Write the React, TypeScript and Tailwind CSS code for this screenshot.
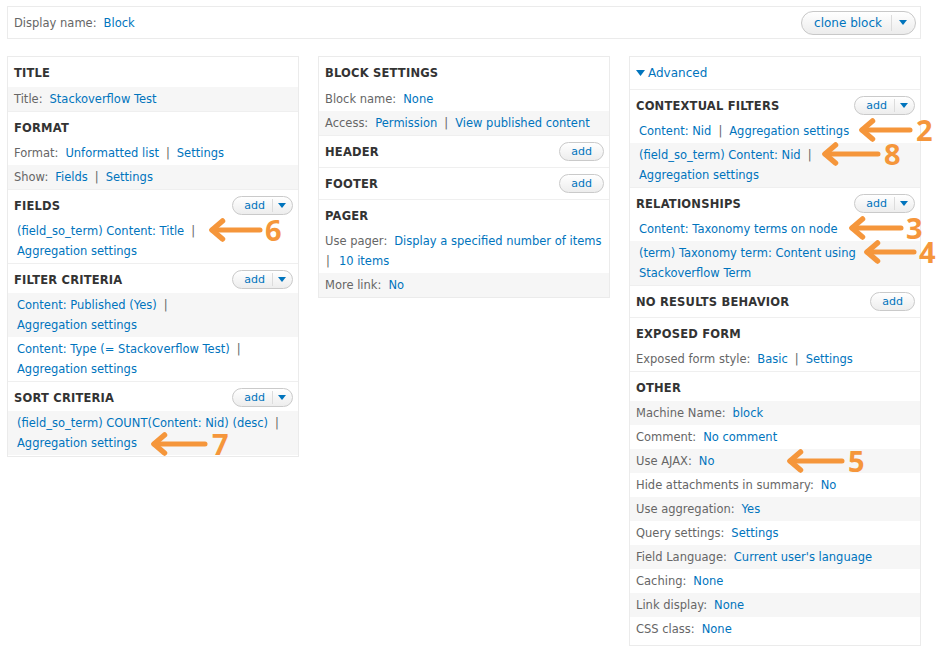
import React from "react";

const BLUE = "text-[#0074bd]";

// small dropdown caret used on buttons
function Caret() {
  return (
    <svg width="8" height="5" viewBox="0 0 8 5">
      <polygon points="0,0 8,0 4,5" fill="#0074bd" />
    </svg>
  );
}

function AddButton({ split }: { split?: boolean }) {
  return (
    <div className="flex h-[19px] items-center rounded-full border border-[#cacaca] bg-linear-to-b from-white to-[#ededed] text-[11px] leading-none text-[#0074bd]">
      <span className={split ? "pl-[11px] pr-[7px]" : "px-[11px]"}>add</span>
      {split && (
        <span className="flex h-[13px] items-center border-l border-[#dcdcdc] pl-[5px] pr-[6px]">
          <Caret />
        </span>
      )}
    </div>
  );
}

function Head({
  title,
  add,
  tall,
}: {
  title: string;
  add?: "split" | "plain";
  tall?: boolean;
}) {
  return (
    <div
      className={`flex items-start justify-between border-t border-[#efefef] pl-[6px] pr-[5px] first:border-t-0 ${
        tall ? "h-[32px]" : "h-[30px]"
      }`}
    >
      <span className="pt-[8px] text-[11.5px] font-bold leading-[16px] tracking-[0.2px] text-[#333]">
        {title}
      </span>
      {add && (
        <div className="pt-[6px]">
          <AddButton split={add === "split"} />
        </div>
      )}
    </div>
  );
}

function Row({
  gray,
  indent,
  lines,
}: {
  gray?: boolean;
  indent?: boolean;
  lines: React.ReactNode[];
}) {
  return (
    <div
      className={`py-[2px] pr-[6px] ${gray ? "bg-[#f6f6f6]" : "bg-white"} ${
        indent ? "pl-[9px]" : "pl-[6px]"
      }`}
    >
      {lines.map((line, i) => (
        <div key={i} className="h-[20px] whitespace-nowrap leading-[20px]">
          {line}
        </div>
      ))}
    </div>
  );
}

const Label = ({ children }: { children: React.ReactNode }) => (
  <span className="mr-[7px] text-[#666]">{children}</span>
);
const Link = ({ children }: { children: React.ReactNode }) => (
  <span className={BLUE}>{children}</span>
);
const Sep = () => <span className="mx-[7px] text-[#666]">|</span>;

function Arrow({ pos, len, n, gap }: { pos: string; len: number; n: string; gap: string }) {
  return (
    <div className={`absolute flex h-[30px] items-center ${pos}`}>
      <svg width={len} height="30" viewBox={`0 0 ${len} 30`}>
        <path
          d={`M${len - 3} 15 H5`}
          stroke="#f5963b"
          strokeWidth="5"
          strokeLinecap="round"
        />
        <path
          d="M15.5 6 L5 15 L15.5 24"
          fill="none"
          stroke="#f5963b"
          strokeWidth="5.5"
          strokeLinecap="round"
          strokeLinejoin="round"
        />
      </svg>
      <span
        className={`font-['Open_Sans',sans-serif] text-[29px] font-bold leading-[18px] text-[#f5963b] ${gap}`}
      >
        {n}
      </span>
    </div>
  );
}

export default function App() {
  return (
    <div className="relative min-h-[658px] w-[947px] bg-white pl-[7px] pt-[6px] font-['DejaVu_Sans',sans-serif] text-[11.5px] text-[#333]">
      {/* Display name bar */}
      <div className="flex h-[33px] w-[914px] items-center justify-between border border-[#ebebeb] pl-[6px] pr-[4px]">
        <div className="pt-[3px]">
          <Label>Display name:</Label>
          <Link>Block</Link>
        </div>
        <div className="flex h-[24px] items-center rounded-full border border-[#c8c8c8] bg-linear-to-b from-white to-[#ececec] text-[12px] text-[#0074bd]">
          <span className="pl-[12px] pr-[9px]">clone block</span>
          <span className="flex h-[16px] items-center border-l border-[#dcdcdc] pl-[7px] pr-[8px]">
            <Caret />
          </span>
        </div>
      </div>

      <div className="mt-[17px] grid w-[914px] grid-cols-3 items-start gap-[19px]">
        {/* Left column */}
        <div className="border border-[#ebebeb] pb-[1px]">
          <Head title="TITLE" />
          <Row gray lines={[<><Label>Title:</Label><Link>Stackoverflow Test</Link></>]} />
          <Head title="FORMAT" />
          <Row
            lines={[
              <>
                <Label>Format:</Label>
                <Link>Unformatted list</Link>
                <Sep />
                <Link>Settings</Link>
              </>,
            ]}
          />
          <Row
            gray
            lines={[
              <>
                <Label>Show:</Label>
                <Link>Fields</Link>
                <Sep />
                <Link>Settings</Link>
              </>,
            ]}
          />
          <Head title="FIELDS" add="split" />
          <Row
            indent
            lines={[
              <>
                <Link>(field_so_term) Content: Title</Link>
                <Sep />
              </>,
              <Link>Aggregation settings</Link>,
            ]}
          />
          <Head title="FILTER CRITERIA" add="split" />
          <Row
            gray
            indent
            lines={[
              <>
                <Link>Content: Published (Yes)</Link>
                <Sep />
              </>,
              <Link>Aggregation settings</Link>,
            ]}
          />
          <Row
            indent
            lines={[
              <>
                <Link>Content: Type (= Stackoverflow Test)</Link>
                <Sep />
              </>,
              <Link>Aggregation settings</Link>,
            ]}
          />
          <Head title="SORT CRITERIA" add="split" />
          <Row
            gray
            indent
            lines={[
              <>
                <Link>(field_so_term) COUNT(Content: Nid) (desc)</Link>
                <Sep />
              </>,
              <Link>Aggregation settings</Link>,
            ]}
          />
        </div>

        {/* Middle column */}
        <div className="border border-[#ebebeb]">
          <Head title="BLOCK SETTINGS" />
          <Row lines={[<><Label>Block name:</Label><Link>None</Link></>]} />
          <Row
            gray
            lines={[
              <>
                <Label>Access:</Label>
                <Link>Permission</Link>
                <Sep />
                <Link>View published content</Link>
              </>,
            ]}
          />
          <Head title="HEADER" add="plain" tall />
          <Head title="FOOTER" add="plain" tall />
          <Head title="PAGER" />
          <Row
            lines={[
              <>
                <Label>Use pager:</Label>
                <Link>Display a specified number of items</Link>
              </>,
              <>
                <span className="ml-[1px] mr-[9px] text-[#666]">|</span>
                <Link>10 items</Link>
              </>,
            ]}
          />
          <Row gray lines={[<><Label>More link:</Label><Link>No</Link></>]} />
        </div>

        {/* Right column */}
        <div className="border border-[#ebebeb] pb-[4px]">
          <div className="flex h-[32px] items-center gap-[3px] px-[6px] text-[12px] text-[#0074bd]">
            <svg width="9" height="6" viewBox="0 0 9 6">
              <polygon points="0,0 9,0 4.5,6" fill="#0074bd" />
            </svg>
            <span>Advanced</span>
          </div>
          <Head title="CONTEXTUAL FILTERS" add="split" />
          <Row
            indent
            lines={[
              <>
                <Link>Content: Nid</Link>
                <Sep />
                <Link>Aggregation settings</Link>
              </>,
            ]}
          />
          <Row
            gray
            indent
            lines={[
              <>
                <Link>(field_so_term) Content: Nid</Link>
                <Sep />
              </>,
              <Link>Aggregation settings</Link>,
            ]}
          />
          <Head title="RELATIONSHIPS" add="split" />
          <Row indent lines={[<Link>Content: Taxonomy terms on node</Link>]} />
          <Row
            gray
            indent
            lines={[
              <Link>(term) Taxonomy term: Content using</Link>,
              <Link>Stackoverflow Term</Link>,
            ]}
          />
          <Head title="NO RESULTS BEHAVIOR" add="plain" tall />
          <Head title="EXPOSED FORM" />
          <Row
            lines={[
              <>
                <Label>Exposed form style:</Label>
                <Link>Basic</Link>
                <Sep />
                <Link>Settings</Link>
              </>,
            ]}
          />
          <Head title="OTHER" />
          <Row gray lines={[<><Label>Machine Name:</Label><Link>block</Link></>]} />
          <Row lines={[<><Label>Comment:</Label><Link>No comment</Link></>]} />
          <Row gray lines={[<><Label>Use AJAX:</Label><Link>No</Link></>]} />
          <Row lines={[<><Label>Hide attachments in summary:</Label><Link>No</Link></>]} />
          <Row gray lines={[<><Label>Use aggregation:</Label><Link>Yes</Link></>]} />
          <Row lines={[<><Label>Query settings:</Label><Link>Settings</Link></>]} />
          <Row gray lines={[<><Label>Field Language:</Label><Link>Current user's language</Link></>]} />
          <Row lines={[<><Label>Caching:</Label><Link>None</Link></>]} />
          <Row gray lines={[<><Label>Link display:</Label><Link>None</Link></>]} />
          <Row lines={[<><Label>CSS class:</Label><Link>None</Link></>]} />
        </div>
      </div>

      {/* annotation arrows */}
      <Arrow pos="left-[207px] top-[215px]" len={56} n="6" gap="ml-[2px]" />
      <Arrow pos="left-[149px] top-[429px]" len={59} n="7" gap="ml-[4px]" />
      <Arrow pos="left-[857px] top-[115px]" len={56} n="2" gap="ml-[3px]" />
      <Arrow pos="left-[820px] top-[139px]" len={61} n="8" gap="ml-[3px]" />
      <Arrow pos="left-[847px] top-[213px]" len={57} n="3" gap="ml-[2px]" />
      <Arrow pos="left-[862px] top-[237px]" len={55} n="4" gap="ml-[2px]" />
      <Arrow pos="left-[785px] top-[446px]" len={60} n="5" gap="ml-[3px]" />
    </div>
  );
}
